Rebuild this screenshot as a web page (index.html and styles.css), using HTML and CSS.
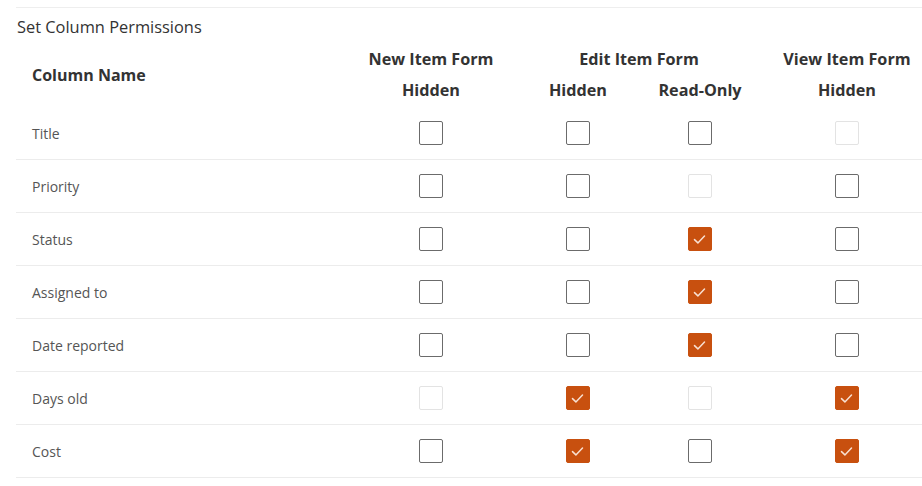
FILE: index.html
```html
<!DOCTYPE html>
<html>
<head>
<meta charset="utf-8">
<link rel="stylesheet" href="styles.css">
</head>
<body>
<div class="panel">
  <div class="title">Set Column Permissions</div>
  <div class="grid">
    <div class="head name">Column Name</div>
    <div class="head group g1">New Item Form</div>
    <div class="head group g2">Edit Item Form</div>
    <div class="head group g4">View Item Form</div>
    <div class="head sub c1">Hidden</div>
    <div class="head sub c2">Hidden</div>
    <div class="head sub c3">Read-Only</div>
    <div class="head sub c4">Hidden</div>
  </div>
  <div class="rows">
    <div class="row"><div class="label">Title</div><div class="cell"><span class="cb"></span></div><div class="cell"><span class="cb"></span></div><div class="cell"><span class="cb"></span></div><div class="cell"><span class="cb dis"></span></div></div>
    <div class="row"><div class="label">Priority</div><div class="cell"><span class="cb"></span></div><div class="cell"><span class="cb"></span></div><div class="cell"><span class="cb dis"></span></div><div class="cell"><span class="cb"></span></div></div>
    <div class="row"><div class="label">Status</div><div class="cell"><span class="cb"></span></div><div class="cell"><span class="cb"></span></div><div class="cell"><span class="cb on"><svg viewBox="1 1 22 22"><path d="M6.5 12.6l3.4 3.3 6.6-6.8"/></svg></span></div><div class="cell"><span class="cb"></span></div></div>
    <div class="row"><div class="label">Assigned to</div><div class="cell"><span class="cb"></span></div><div class="cell"><span class="cb"></span></div><div class="cell"><span class="cb on"><svg viewBox="1 1 22 22"><path d="M6.5 12.6l3.4 3.3 6.6-6.8"/></svg></span></div><div class="cell"><span class="cb"></span></div></div>
    <div class="row"><div class="label">Date reported</div><div class="cell"><span class="cb"></span></div><div class="cell"><span class="cb"></span></div><div class="cell"><span class="cb on"><svg viewBox="1 1 22 22"><path d="M6.5 12.6l3.4 3.3 6.6-6.8"/></svg></span></div><div class="cell"><span class="cb"></span></div></div>
    <div class="row"><div class="label">Days old</div><div class="cell"><span class="cb dis"></span></div><div class="cell"><span class="cb on"><svg viewBox="1 1 22 22"><path d="M6.5 12.6l3.4 3.3 6.6-6.8"/></svg></span></div><div class="cell"><span class="cb dis"></span></div><div class="cell"><span class="cb on"><svg viewBox="1 1 22 22"><path d="M6.5 12.6l3.4 3.3 6.6-6.8"/></svg></span></div></div>
    <div class="row"><div class="label">Cost</div><div class="cell"><span class="cb"></span></div><div class="cell"><span class="cb on"><svg viewBox="1 1 22 22"><path d="M6.5 12.6l3.4 3.3 6.6-6.8"/></svg></span></div><div class="cell"><span class="cb"></span></div><div class="cell"><span class="cb on"><svg viewBox="1 1 22 22"><path d="M6.5 12.6l3.4 3.3 6.6-6.8"/></svg></span></div></div>
  </div>
</div>
</body>
</html>
```
FILE: styles.css
```css
html, body {
  margin: 0;
  padding: 0;
  background: #ffffff;
  overflow: hidden;
}
body {
  font-family: "Open Sans", "Noto Sans", sans-serif;
  color: #323130;
}
.panel {
  margin-left: 16px;
  width: 917px;
  margin-top: 7px;
  border-top: 1px solid #eeeeee;
}
.title {
  height: 38px;
  padding-left: 1px;
  font-size: 16.4px;
  line-height: 37px;
  color: #333333;
}
.grid {
  display: grid;
  grid-template-columns: 329px 172px 122px 122px 172px;
  grid-template-rows: 26px 35px;
}
.head {
  font-weight: 700;
  font-size: 16.2px;
  color: #333333;
  display: flex;
  align-items: center;
  justify-content: center;
}
.name {
  grid-row: 1 / span 2;
  grid-column: 1;
  justify-content: flex-start;
  padding-left: 16px;
  font-size: 16px;
  padding-bottom: 3px;
}
.g1 { grid-row: 1; grid-column: 2; }
.g2 { grid-row: 1; grid-column: 3 / span 2; }
.g4 { grid-row: 1; grid-column: 5; }
.sub { grid-row: 2; }
.c1 { grid-column: 2; }
.c2 { grid-column: 3; }
.c3 { grid-column: 4; }
.c4 { grid-column: 5; }
.rows {
  display: flex;
  flex-direction: column;
}
.row {
  display: grid;
  grid-template-columns: 329px 172px 122px 122px 172px;
  height: 52px;
  border-bottom: 1px solid #ececec;
  align-items: center;
}
.label {
  padding-left: 16px;
  font-size: 14px;
  color: #555555;
  padding-top: 1px;
}
.cell {
  display: flex;
  justify-content: center;
}
.cb {
  box-sizing: border-box;
  width: 24px;
  height: 24px;
  border: 1px solid #6b6b6b;
  border-radius: 2px;
  display: flex;
  align-items: center;
  justify-content: center;
}
.cb.dis {
  border-color: #e3e3e3;
}
.cb.on {
  background: #c8500f;
  border-color: #c8500f;
}
.cb svg {
  width: 22px;
  height: 22px;
}
.cb svg path {
  fill: none;
  stroke: #f8e0d2;
  stroke-width: 1.5;
  stroke-linecap: round;
  stroke-linejoin: round;
}
```
